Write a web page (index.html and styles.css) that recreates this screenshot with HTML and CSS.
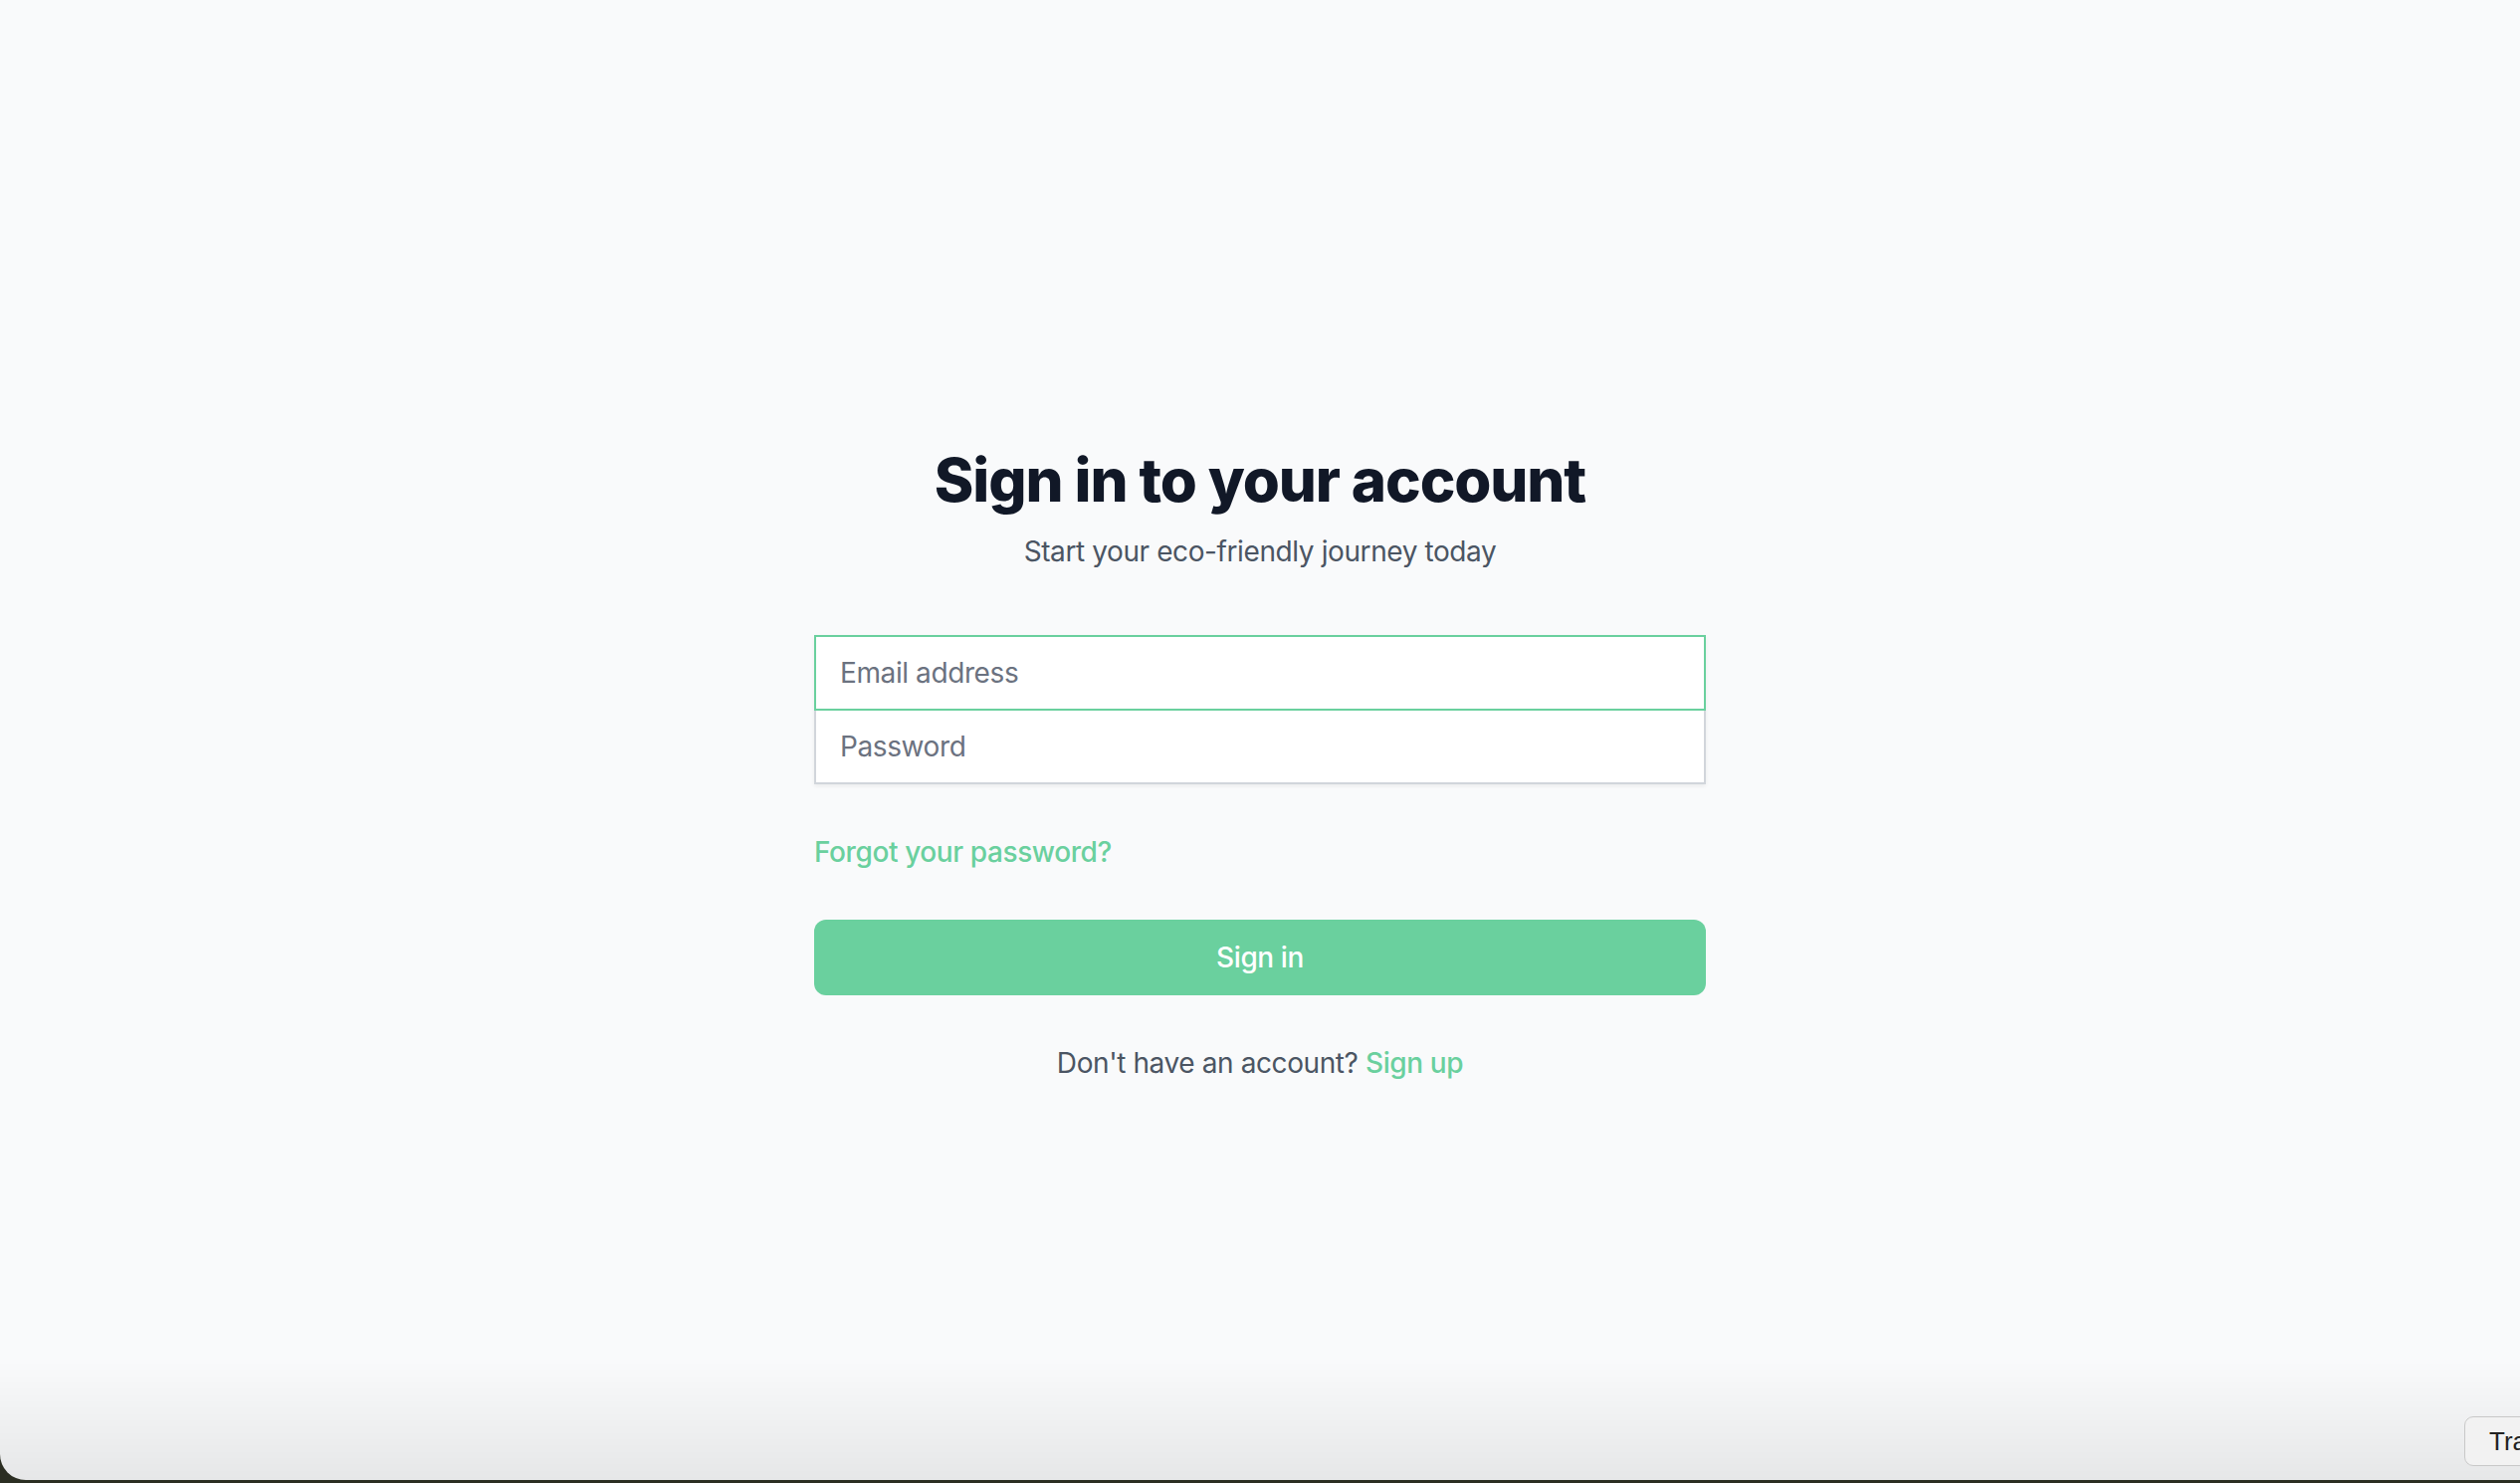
FILE: index.html
```html
<!DOCTYPE html>
<html lang="en">

<head>
    <meta charset="UTF-8">
    <meta name="viewport" content="width=device-width, initial-scale=1.0">
    <title>Sign in</title>
    <link rel="stylesheet" href="styles.css">
</head>

<body>

    <div class="page">
        <div class="card">
            <h2 class="title">Sign in to your account</h2>
            <p class="subtitle">Start your eco-friendly journey today</p>

            <form class="form" onsubmit="return false">
                <div class="fields">
                    <input type="email" class="field field-active" placeholder="Email address">
                    <input type="password" class="field" placeholder="Password">
                </div>

                <div class="row">
                    <a href="#" class="link">Forgot your password?</a>
                </div>

                <button type="submit" class="submit">Sign in</button>

                <p class="signup">Don't have an account? <a href="#" class="link">Sign up</a></p>
            </form>
        </div>
    </div>

    <!-- window edge + extension popup seen in the capture -->
    <div class="fade"></div>
    <div class="popup">Tra</div>

</body>

</html>
```

FILE: styles.css
```css
html {
    background: #2b2e22;
}

body {
    margin: 0;
    font-family: Inter, "Noto Sans", Arial, sans-serif;
    background: #f9fafb;
    color: #111827;
    height: 1487px;
    border-bottom-left-radius: 26px;
    overflow: hidden;
    letter-spacing: -0.4px;
}

.page {
    min-height: 100%;
    height: 100%;
    box-sizing: border-box;
    display: flex;
    align-items: center;
    justify-content: center;
    padding: 94px 32px 48px;
}

.card {
    width: 896px;
}

.title {
    margin: 0;
    text-align: center;
    font-size: 60px;
    line-height: 72px;
    font-weight: 800;
    color: #111827;
    letter-spacing: -1.1px;
}

.subtitle {
    margin: 16px 0 0;
    text-align: center;
    font-size: 28px;
    line-height: 40px;
    color: #4b5563;
}

.form {
    margin-top: 64px;
    display: flex;
    flex-direction: column;
    gap: 48px;
}

.fields {
    display: flex;
    flex-direction: column;
    box-shadow: 0 2px 4px rgba(0, 0, 0, 0.06);
}

.field {
    display: block;
    width: 100%;
    box-sizing: border-box;
    margin: 0;
    padding: 16px 24px;
    font-family: inherit;
    font-size: 28px;
    line-height: 40px;
    letter-spacing: -0.4px;
    color: #111827;
    background: #fff;
    border: 2px solid #d1d5db;
    border-radius: 0;
    outline: none;
}

.field + .field {
    margin-top: -2px;
}

.field::placeholder {
    color: #6b7280;
}

.field-active {
    position: relative;
    z-index: 1;
    border-color: #6ad09e;
}

.row {
    display: flex;
    justify-content: space-between;
    font-size: 28px;
    line-height: 40px;
}

.link {
    color: #6ad09e;
    font-weight: 500;
    text-decoration: none;
}

.submit {
    width: 100%;
    padding: 16px 32px;
    font-family: inherit;
    font-size: 28px;
    line-height: 40px;
    letter-spacing: -0.4px;
    font-weight: 500;
    color: #fff;
    background: #6ad09e;
    border: 2px solid transparent;
    border-radius: 12px;
    cursor: pointer;
}

.signup {
    margin: 0;
    text-align: center;
    font-size: 28px;
    line-height: 40px;
    color: #4b5563;
}

.fade {
    position: fixed;
    left: 0;
    right: 0;
    bottom: 3px;
    height: 120px;
    background: linear-gradient(rgba(0, 0, 0, 0), rgba(0, 0, 0, 0.075));
    border-bottom-left-radius: 26px;
    pointer-events: none;
}

.popup {
    position: fixed;
    left: 2476px;
    bottom: 17px;
    width: 120px;
    height: 50px;
    box-sizing: border-box;
    padding: 7px 0 0 24px;
    font-family: "Liberation Sans", Arial, sans-serif;
    font-size: 26px;
    line-height: 34px;
    letter-spacing: 0;
    color: #222;
    background: #f2f2f2;
    border: 1px solid #c8c8c8;
    border-radius: 9px;
    overflow: hidden;
}
```
